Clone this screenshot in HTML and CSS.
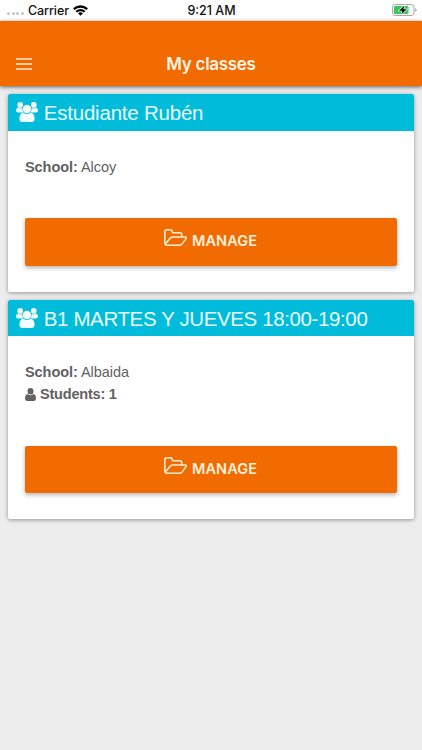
FILE: index.html
```html
<!DOCTYPE html>
<html lang="en">
<head>
<meta charset="utf-8">
<title>My classes</title>
<link rel="stylesheet" href="styles.css">
</head>
<body>
<svg class="symbols" aria-hidden="true">
  <symbol id="users" viewBox="0 0 22 20">
    <circle cx="4.2" cy="2.9" r="2.8"/><circle cx="17.8" cy="2.9" r="2.8"/>
    <path d="M2 5.500q2.200 1.500 4.300 .6q-.3 2.700 1.300 4.400H2.200Q0 10.500 0 8.600Q.2 6 2 5.500zM20 5.500q-2.200 1.500-4.300 .6q.3 2.700-1.300 4.400h5.400q2.200 0 2.200-1.900Q21.800 6 20 5.500z"/>
    <circle cx="11" cy="7" r="4.200"/>
    <path d="M7.400 10.700q3.600 2.600 7.200 0q3.900.5 4 6q0 3.300-3.400 3.300H6.800q-3.400 0-3.400-3.300q.1-5.500 4-6z"/>
  </symbol>
  <symbol id="folder" viewBox="0 0 23 17">
    <path d="M.8 13.800V3Q.8.800 3 .8h3.200q2.100 0 2.100 2.100 0 .9 .9 .9h6.500q2.100 0 2.100 2.100v2M.8 13.800Q.8 16.200 3 16.200h12.700q1.400 0 2.300-1.100l3.800-5.200q1.300-2-1-2H9q-1.600 0-2.600 1.200L1.300 15"/>
  </symbol>
</svg>
<div class="status">
  <div class="status-left">
    <span class="signal"><i></i><i></i><i></i><i></i></span>
    <span class="carrier">Carrier</span>
    <svg class="wifi" viewBox="0 0 16 11"><path d="M8 0Q12.500 0 16 3.200L14.300 5Q11.500 2.500 8 2.500T1.700 5L0 3.200Q3.500 0 8 0zM8 3.800q3 0 5.300 2.100l-1.700 1.700Q10 6.200 8 6.200T4.400 7.600L2.700 5.900Q5 3.800 8 3.800zM8 7.400q1.500 0 2.600 1L8 11 5.400 8.400q1.100-1 2.600-1z"/></svg>
  </div>
  <span class="clock">9:21 AM</span>
  <svg class="battery" viewBox="0 0 26 12">
    <rect x=".5" y=".5" width="21.500" height="11" rx="2.800" fill="none" stroke="#a5a5a5"/>
    <rect x="2" y="2" width="14.500" height="8" rx="1.300" fill="#35c759"/>
    <path d="M23.300 4q1.300.5 1.300 2t-1.300 2z" fill="#a5a5a5"/>
    <path d="M12.500 1.500 7 6.700h3.500L9.200 10.500l5.600-5.200h-3.500z" fill="#000" stroke="#fff" stroke-width="1.200" paint-order="stroke"/>
  </svg>
</div>
<header class="bar">
  <svg class="menu" viewBox="0 0 16 12"><path d="M0 1h16M0 6h16M0 11h16"/></svg>
  <h1>My classes</h1>
</header>
<main>
  <section class="card">
    <h2><svg class="users"><use href="#users"/></svg><span class="name-a">Estudiante Rubén</span></h2>
    <div class="body body-a">
      <p><b>School:</b> Alcoy</p>
      <button><svg class="folder"><use href="#folder"/></svg><span>MANAGE</span></button>
    </div>
  </section>
  <section class="card">
    <h2><svg class="users"><use href="#users"/></svg><span class="name-b">B1 MARTES Y JUEVES 18:00-19:00</span></h2>
    <div class="body body-b">
      <p><b>School:</b> Albaida</p>
      <p class="students"><svg class="person" viewBox="0 0 11 12" preserveAspectRatio="none"><circle cx="5.500" cy="3.100" r="3"/><path d="M2.600 5.500q2.900 2.400 5.800 0Q11 6 11 9.700 11 12 9 12H2Q0 12 0 9.700 0 6 2.600 5.500z"/></svg><b>Students: 1</b></p>
      <button><svg class="folder"><use href="#folder"/></svg><span>MANAGE</span></button>
    </div>
  </section>
</main>
</body>
</html>
```
FILE: styles.css
```css
* { box-sizing: border-box; }
body {
  margin: 0;
  height: 750px;
  overflow: hidden;
  background: #ededed;
  font-family: "Liberation Sans", Arial, sans-serif;
}
.symbols { position: absolute; width: 0; height: 0; }
.status {
  height: 21px;
  padding: 0 5px 0 7px;
  background: #fff;
  color: #111;
  display: grid;
  grid-template-columns: 1fr auto 1fr;
  align-items: center;
  font: 500 12.500px/21px Inter, sans-serif;
}
.status-left { display: flex; align-items: center; }
.signal { display: flex; gap: 1.700px; width: 21px; padding-top: 6px; }
.signal i { width: 3px; height: 3px; border-radius: 50%; background: #c4c4c4; }
.carrier { letter-spacing: -.1px; }
.wifi { width: 15px; height: 11px; margin-left: 4.500px; }
.clock { margin-right: 1px; }
.battery { width: 26px; height: 12px; justify-self: end; margin: -1px -1px 0 0; }
.bar {
  height: 65px;
  padding: 20px 16px 0;
  background: #f16b00;
  box-shadow: 0 1px 4px rgba(0, 0, 0, .6);
  color: #fff5e5;
  display: grid;
  grid-template-columns: 16px 1fr 16px;
  align-items: center;
}
.menu { width: 16px; height: 12px; fill: none; stroke: #ffead2; stroke-width: 1.500; }
h1 { margin: 1px 0 0; text-align: center; font: 600 17px/44px Inter, sans-serif; letter-spacing: -.3px; }
main { padding: 8px 8.300px; display: grid; gap: 8px; }
.card {
  background: #fff;
  border-radius: 2px;
  box-shadow: 0 1px 4px rgba(0, 0, 0, .38);
}
h2 {
  margin: 0;
  height: 36.700px;
  padding: 0 8px;
  display: flex;
  align-items: center;
  background: #00bbd9;
  color: #e9fcff;
  border-radius: 2px 2px 0 0;
  font-size: 20.500px;
  line-height: 37px;
  font-weight: 400;
}
.users { width: 22px; height: 20px; margin-right: 5.500px; fill: #f4feff; }
.name-a { letter-spacing: -.22px; }
.name-b { letter-spacing: -.38px; }
.body { padding: 25px 16.700px 0; color: #626262; }
.body-a { height: 161px; }
.body-b { height: 183px; }
p { margin: 0; font-size: 14.500px; line-height: 22px; letter-spacing: -.05px; }
.students { display: flex; align-items: center; letter-spacing: -.2px; }
.person { width: 11px; height: 13px; margin-right: 4px; fill: #626262; }
button {
  width: 100%;
  height: 47.500px;
  padding: 0 1px 2px 0;
  border: 0;
  border-radius: 2px;
  background: #f16b00;
  box-shadow: 0 2px 4px rgba(0, 0, 0, .3);
  color: #fff2dc;
  display: flex;
  align-items: center;
  justify-content: center;
  gap: 5px;
  font: 600 14.500px/20px Inter, sans-serif;
  letter-spacing: .1px;
}
.body-a button { margin-top: 40.500px; }
.body-b button { margin-top: 40.500px; }
.folder { width: 23px; height: 17px; margin-bottom: 6px; fill: none; stroke: #fff0d8; stroke-width: 1.500; stroke-linejoin: round; }
```
